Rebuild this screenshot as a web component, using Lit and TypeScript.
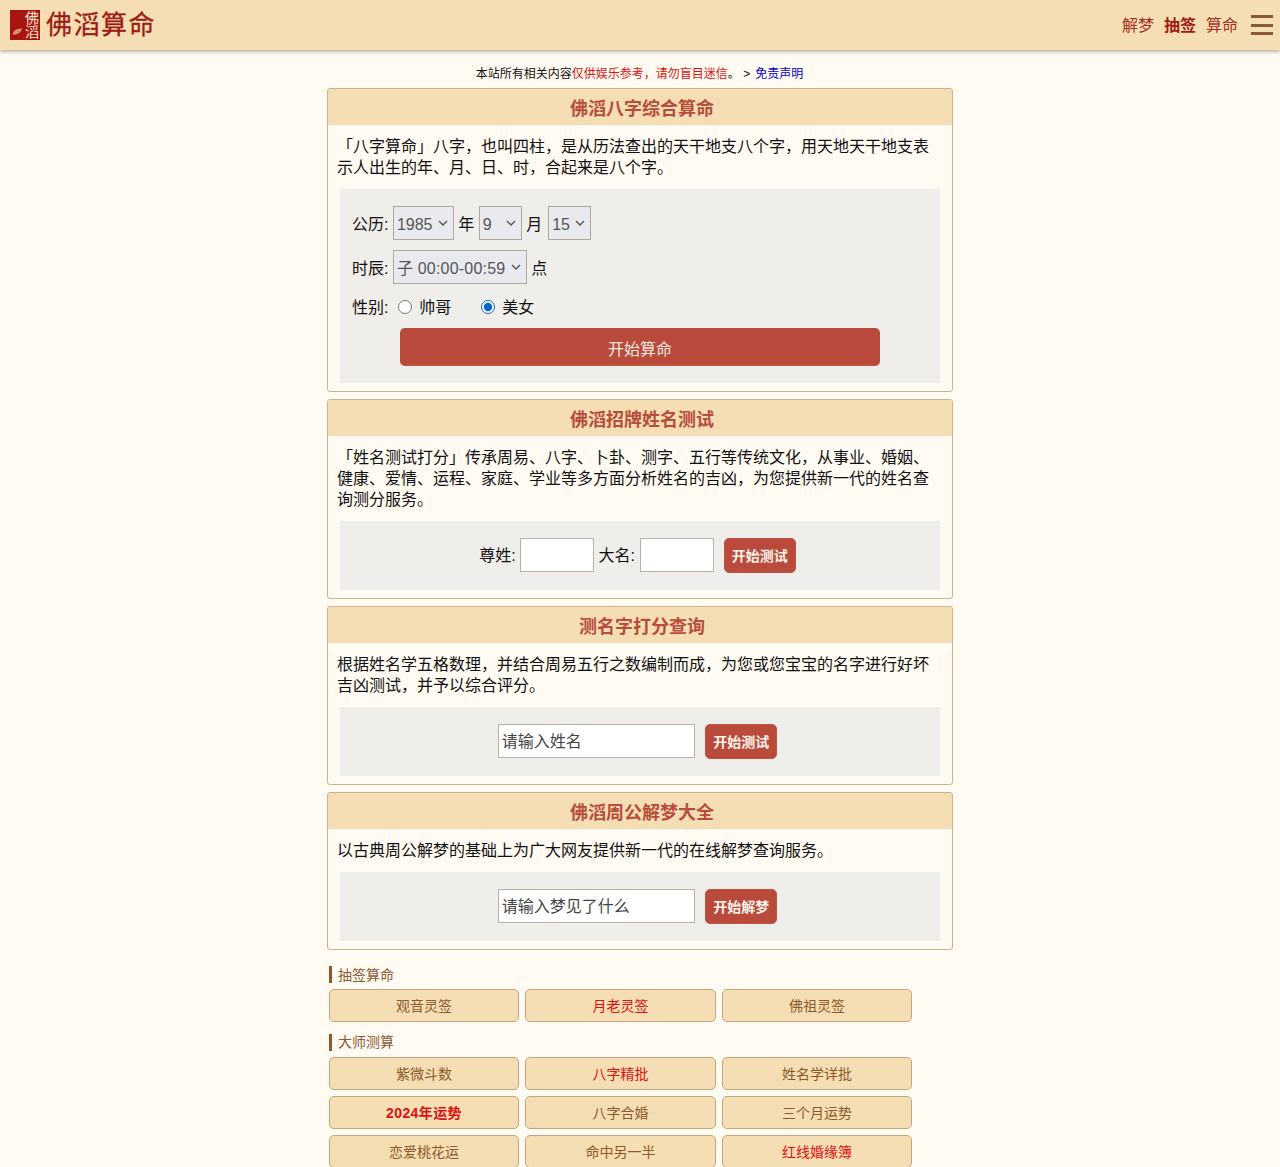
import { LitElement, html, css } from "lit";
import { customElement } from "lit/decorators.js";

const fortune = [["观音灵签"], ["月老灵签", "red"], ["佛祖灵签"]];
const master = [
  ["紫微斗数"], ["八字精批", "red"], ["姓名学详批"],
  ["2024年运势", "hot"], ["八字合婚"], ["三个月运势"],
  ["恋爱桃花运"], ["命中另一半"], ["红线婚缘簿", "red"],
];

@customElement("app-root")
export class AppRoot extends LitElement {
  static styles = css`
    :host {
      display: block;
      min-height: 1167px;
      background: #fffaf2;
      color: #111;
      font-family: "Liberation Sans", "Noto Sans CJK SC", sans-serif;
      font-size: 16px;
      line-height: 21px;
    }
    header {
      height: 50px;
      background: #f5deb3;
      box-shadow: 0 1px 4px rgba(90, 70, 40, 0.55);
      display: flex;
      align-items: center;
      justify-content: space-between;
      padding: 0 7px 0 10px;
    }
    .brand { display: flex; align-items: center; gap: 6px; }
    .seal {
      position: relative;
      width: 30px;
      height: 30px;
      background: #a81410;
      overflow: hidden;
    }
    .seal span {
      position: absolute;
      right: 0;
      top: 1px;
      width: 16px;
      color: #f7e4d0;
      font-size: 14px;
      line-height: 14px;
      text-align: center;
    }
    .seal svg { position: absolute; left: 2px; bottom: 4px; }
    .name {
      font-size: 26px;
      line-height: 30px;
      letter-spacing: 1.5px;
      color: #9c1c14;
      -webkit-text-stroke: 0.3px #9c1c14;
    }
    nav { display: flex; align-items: center; gap: 10px; color: #a5301f; }
    nav b { color: #a01a10; }
    .menu {
      display: flex;
      flex-direction: column;
      justify-content: space-between;
      width: 22px;
      height: 20px;
      margin-left: 3px;
    }
    .menu i { display: block; height: 3px; background: #8b5a33; }
    .notice {
      margin: 16px 0 0;
      height: 22px;
      padding-right: 1px;
      text-align: center;
      font-size: 12px;
      line-height: 17px;
    }
    .notice em { font-style: normal; color: #e01010; }
    .notice a { color: #0000cc; margin-left: 5px; }
    main { width: 626px; margin: 0 auto; }
    .card {
      border: 1px solid #c9b48e;
      border-radius: 3px;
      margin-bottom: 7px;
      overflow: hidden;
    }
    .card h2 {
      margin: 0;
      height: 36px;
      box-sizing: border-box;
      padding: 2px 0 0 4px;
      background: #f5deb3;
      color: #b84d3c;
      font-size: 18px;
      line-height: 37px;
      text-align: center;
    }
    .card p { margin: 11px 9px 11px 9px; }
    .form {
      width: 600px;
      box-sizing: border-box;
      margin: 0 auto 8px;
      background: #f0eeeb;
    }
    .stack { padding: 17px 12px 17px; }
    .row { display: flex; align-items: center; gap: 4.45px; }
    .r1 { height: 34px; }
    .r2 { height: 34px; margin-top: 10px; }
    .r3 { height: 28px; margin-top: 9px; }
    .lb { padding-top: 2px; }
    select {
      appearance: none;
      height: 34px;
      box-sizing: border-box;
      border: 1px solid #b3a69a;
      border-radius: 0;
      background-color: #e9e9f0;
      background-image: url("data:image/svg+xml,%3Csvg xmlns='http://www.w3.org/2000/svg' width='10' height='6'%3E%3Cpath d='M1 1l4 4 4-4' fill='none' stroke='%23555' stroke-width='1.4'/%3E%3C/svg%3E");
      background-repeat: no-repeat;
      background-position: right 5px center;
      color: #555;
      font: inherit;
      padding: 2px 0 0 3px;
    }
    .y { width: 61px; }
    .m { width: 43px; }
    .d { width: 43px; margin-left: 1.5px; }
    .h { width: 134px; letter-spacing: 0.2px; }
    .radio { display: flex; align-items: center; gap: 7.45px; margin-right: 20px; }
    input[type="radio"] { margin: 0 0 0 5px; width: 14px; height: 14px; accent-color: #0b63ce; }
    .go {
      display: block;
      width: 480px;
      height: 38px;
      margin: 7px auto 0;
      border: 0;
      border-bottom: 1px solid #c2603a;
      border-radius: 5px;
      background: #b94a3c;
      color: #f8e9dc;
      font: inherit;
      font-size: 16px;
      padding: 5px 0 0;
    }
    .inline {
      display: flex;
      align-items: center;
      justify-content: center;
      height: 69px;
      gap: 4.45px;
      padding-right: 5px;
    }
    input[type="text"] {
      height: 34px;
      box-sizing: border-box;
      border: 1px solid #b9b0a6;
      background: #fff;
      color: #555;
      font: inherit;
      padding: 2px 3px 0;
      margin: -1px 0 1px;
    }
    input.short { width: 74px; }
    input.short.b { margin-left: 1px; margin-right: -1px; }
    input.long { width: 197px; }
    input::placeholder { color: #444; opacity: 1; }
    .small {
      width: 72px;
      height: 35px;
      margin-left: 6px;
      border: 1px solid #c4523f;
      border-radius: 5px;
      background: #b94a3c;
      color: #fff4ea;
      font: inherit;
      font-size: 14px;
      font-weight: bold;
      padding: 2px 0 0;
    }
    .links { padding: 0 2px; margin-top: 16px; }
    .links h3 {
      margin: 0 0 6px;
      border-left: 3px solid #8b5a33;
      padding-left: 6px;
      height: 17px;
      font-size: 14px;
      line-height: 19px;
      font-weight: normal;
      color: #8b5a33;
    }
    .links h3.next { line-height: 17px; }
    .grid {
      display: grid;
      grid-template-columns: 190px 191px 190px;
      column-gap: 6px;
      row-gap: 6px;
      margin-bottom: 12px;
    }
    .grid a {
      height: 33px;
      box-sizing: border-box;
      border: 1px solid #c3a67e;
      border-radius: 5px;
      background: #f5deb3;
      color: #8b5a2b;
      font-size: 14px;
      line-height: 33px;
      text-align: center;
    }
    .grid a.red { color: #e01010; }
    .grid a.hot { color: #e01010; font-weight: bold; letter-spacing: 0.4px; }
  `;

  private links(items: string[][]) {
    return html`<div class="grid">
      ${items.map(([t, c]) => html`<a class=${c || ""}>${t}</a>`)}
    </div>`;
  }

  render() {
    return html`
      <header>
        <div class="brand">
          <div class="seal">
            <span>佛<br />滔</span>
            <svg width="11" height="9" viewBox="0 0 14 12">
              <path d="M1 8C3 3 8 2 13 2C12 7 8 10 3 10L1 11Z" fill="#d98a78" />
            </svg>
          </div>
          <div class="name">佛滔算命</div>
        </div>
        <nav>
          <span>解梦</span><b>抽签</b><span>算命</span>
          <div class="menu"><i></i><i></i><i></i></div>
        </nav>
      </header>
      <div class="notice">
        本站所有相关内容<em>仅供娱乐参考，请勿盲目迷信</em>。 &gt;<a>免责声明</a>
      </div>
      <main>
        <section class="card">
          <h2>佛滔八字综合算命</h2>
          <p>「八字算命」八字，也叫四柱，是从历法查出的天干地支八个字，用天地天干地支表示人出生的年、月、日、时，合起来是八个字。</p>
          <div class="form stack">
            <div class="row r1">
              <span class="lb">公历:</span>
              <select class="y"><option>1985</option></select>
              <span class="lb">年</span>
              <select class="m"><option>9</option></select>
              <span class="lb">月</span>
              <select class="d"><option>15</option></select>
            </div>
            <div class="row r2">
              <span class="lb">时辰:</span>
              <select class="h"><option>子 00:00-00:59</option></select>
              <span class="lb">点</span>
            </div>
            <div class="row r3">
              性别:
              <label class="radio"><input type="radio" name="g" />帅哥</label>
              <label class="radio"><input type="radio" name="g" checked />美女</label>
            </div>
            <button class="go">开始算命</button>
          </div>
        </section>
        <section class="card">
          <h2>佛滔招牌姓名测试</h2>
          <p>「姓名测试打分」传承周易、八字、卜卦、测字、五行等传统文化，从事业、婚姻、健康、爱情、运程、家庭、学业等多方面分析姓名的吉凶，为您提供新一代的姓名查询测分服务。</p>
          <div class="form inline">
            尊姓: <input type="text" class="short" /> 大名: <input type="text" class="short b" />
            <button class="small">开始测试</button>
          </div>
        </section>
        <section class="card">
          <h2>测名字打分查询</h2>
          <p>根据姓名学五格数理，并结合周易五行之数编制而成，为您或您宝宝的名字进行好坏吉凶测试，并予以综合评分。</p>
          <div class="form inline">
            <input type="text" class="long" placeholder="请输入姓名" />
            <button class="small">开始测试</button>
          </div>
        </section>
        <section class="card">
          <h2>佛滔周公解梦大全</h2>
          <p>以古典周公解梦的基础上为广大网友提供新一代的在线解梦查询服务。</p>
          <div class="form inline">
            <input type="text" class="long" placeholder="请输入梦见了什么" />
            <button class="small">开始解梦</button>
          </div>
        </section>
        <div class="links">
          <h3>抽签算命</h3>
          ${this.links(fortune)}
          <h3 class="next">大师测算</h3>
          ${this.links(master)}
        </div>
      </main>
    `;
  }
}
